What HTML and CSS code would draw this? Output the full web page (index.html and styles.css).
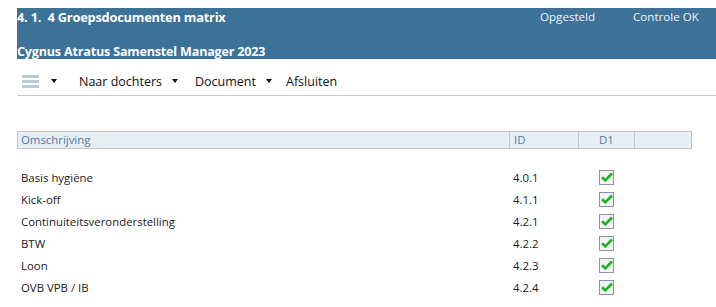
FILE: index.html
```html
<!DOCTYPE html>
<html lang="nl">
<head>
    <meta charset="UTF-8">
    <title>Groepsdocumenten matrix</title>
    <link rel="stylesheet" href="styles.css">
</head>
<body>

    <header class="kop">
        <div class="kop-regel">
            <span class="kop-titel">4. 1.&nbsp; 4 Groepsdocumenten matrix</span>
            <span class="kop-status">Opgesteld</span>
            <span class="kop-status kop-controle">Controle OK</span>
        </div>
        <div class="kop-regel kop-sub">
            <span class="kop-titel">Cygnus Atratus Samenstel Manager 2023</span>
        </div>
    </header>

    <nav class="werkbalk">
        <span class="menu-icoon">
            <svg width="17" height="13" viewBox="0 0 17 13">
                <rect x="0" y="0" width="17" height="3" fill="#b9cad8"/>
                <rect x="0" y="5" width="17" height="3" fill="#b9cad8"/>
                <rect x="0" y="10" width="17" height="3" fill="#b9cad8"/>
            </svg>
        </span>
        <span class="pijl pijl-eerste"></span>
        <span class="knop">Naar dochters</span>
        <span class="pijl pijl-breed"></span>
        <span class="knop">Document</span>
        <span class="pijl"></span>
        <span class="knop">Afsluiten</span>
    </nav>

    <div class="tabel">
        <div class="tabel-kop">
            <div class="kol-oms">Omschrijving</div>
            <div class="kol-id">ID</div>
            <div class="kol-d1">D1</div>
            <div class="kol-leeg"></div>
        </div>
        <div class="tabel-body" id="rijen"></div>
    </div>

    <script>
        // Regels van de matrix
        const regels = [
            ['Basis hygiëne', '4.0.1'],
            ['Kick-off', '4.1.1'],
            ['Continuiteitsveronderstelling', '4.2.1'],
            ['BTW', '4.2.2'],
            ['Loon', '4.2.3'],
            ['OVB VPB / IB', '4.2.4']
        ];

        const vinkje = '<span class="vak"><svg width="12" height="10" viewBox="0 0 12 10">' +
            '<path d="M1 5.2 L4.3 8.3 L11 1.5" fill="none" stroke="#19b41d" stroke-width="2.6"/></svg></span>';

        const body = document.getElementById('rijen');
        regels.forEach(function (r) {
            const rij = document.createElement('div');
            rij.className = 'rij';
            rij.innerHTML = '<div class="kol-oms">' + r[0] + '</div>' +
                '<div class="kol-id">' + r[1] + '</div>' +
                '<div class="kol-d1">' + vinkje + '</div>' +
                '<div class="kol-leeg"></div>';
            body.appendChild(rij);
        });
    </script>

</body>
</html>
```

FILE: styles.css
```css
body {
    margin: 0;
    padding: 8px 0 0 17px;
    font-family: "Open Sans", "Noto Sans", sans-serif;
    font-size: 11.4px;
    color: #1a1a1a;
    background-color: #fff;
}

.kop {
    background-color: #3c7198;
    color: #fff;
    height: 51px;
}

.kop-regel {
    display: flex;
    align-items: center;
    height: 18px;
    line-height: 18px;
}

.kop-sub {
    margin-top: 17px;
}

.kop-titel {
    font-weight: bold;
    font-size: 12.8px;
    letter-spacing: -0.2px;
}

.kop-sub .kop-titel {
    font-size: 12.6px;
}

.kop-status {
    margin-left: auto;
    color: #eef3f7;
    font-size: 11.6px;
    width: 93px;
}

.kop-controle {
    margin-left: 0;
    width: 83px;
}

.werkbalk {
    display: flex;
    align-items: center;
    height: 28px;
    padding: 8px 0 0 5px;
    border-bottom: 1px solid #c8c8c8;
    color: #111;
    font-size: 12.5px;
}

.menu-icoon {
    display: flex;
}

.pijl {
    width: 0;
    height: 0;
    border-left: 3.5px solid transparent;
    border-right: 3.5px solid transparent;
    border-top: 4px solid #111;
    margin: 0 14px 0 10px;
}

.pijl-eerste {
    margin: 0 22px 0 12px;
}

.pijl-breed {
    margin-right: 17px;
}

.knop {
    white-space: nowrap;
}

.tabel {
    margin-top: 35px;
    width: 675px;
}

.tabel-kop,
.rij {
    display: grid;
    grid-template-columns: 1fr 69px 56px 57px;
    border: 1px solid transparent;
}

.tabel-kop > div + div,
.rij > div + div {
    border-left: 1px solid transparent;
}

.tabel-kop {
    height: 16px;
    line-height: 16px;
    background-color: #e7eef4;
    border-color: #c2c7cc;
    color: #4c7ba6;
}

.tabel-kop > div + div {
    border-left-color: #c2c7cc;
}

.kol-oms {
    padding-left: 3px;
}

.kol-id {
    padding-left: 4px;
}

.rij .kol-id {
    padding-left: 3px;
}

.kol-d1 {
    text-align: center;
}

.tabel-body {
    padding-top: 17px;
}

.rij {
    height: 22px;
    border-top: 0;
    border-bottom: 0;
    align-items: center;
}

.rij .kol-d1 {
    display: flex;
    justify-content: center;
}

.vak {
    display: inline-flex;
    align-items: center;
    justify-content: center;
    width: 13px;
    height: 13px;
    border: 1px solid #7d95ad;
    background-color: #f2f2f2;
}
```
